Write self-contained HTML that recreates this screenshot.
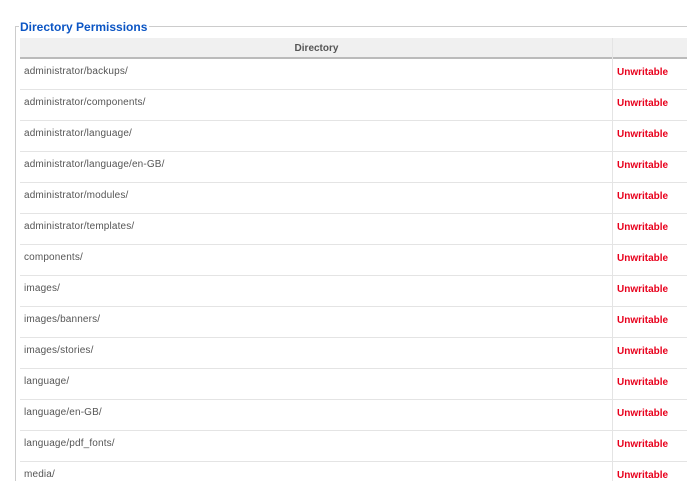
<!DOCTYPE html>
<html style="overflow:hidden;height:481px"><head><style>
body{margin:0;width:687px;height:481px;overflow:hidden;background:#fff;font-family:"Liberation Sans",Arial,sans-serif;position:relative}
.fs{position:absolute;left:15px;top:26px;width:700px;height:455px;border-left:1px solid #ccc;border-top:1px solid #ccc}
.lg{position:absolute;left:19px;top:20px;background:#fff;padding:0 2px 0 1px;color:#0b55c4;font-weight:bold;font-size:12px;line-height:15px}
.hd{position:absolute;left:20px;top:38px;width:700px;height:19px;background:#f0f0f0;border-bottom:2px solid #bbb}
.hd span{position:absolute;left:0;width:593px;text-align:center;top:5px;font-size:10px;font-weight:bold;color:#555}
.vl{position:absolute;left:612px;top:38px;width:1px;height:443px;background:#e4e4e4}
.row{position:absolute;left:20px;width:700px;height:30px;border-bottom:1px solid #e4e4e4}
.row .d{position:absolute;left:4px;top:7px;font-size:10px;letter-spacing:0.15px;color:#555}
.row .u{position:absolute;left:597px;top:8px;font-size:10px;font-weight:bold;color:#e8001c}
</style></head><body>
<div class="fs"></div>
<div class="hd"><span>Directory</span></div>
<div class="vl"></div>
<div class="lg">Directory Permissions</div>
<div class="row" style="top:59px"><span class="d">administrator/backups/</span><span class="u">Unwritable</span></div>
<div class="row" style="top:90px"><span class="d">administrator/components/</span><span class="u">Unwritable</span></div>
<div class="row" style="top:121px"><span class="d">administrator/language/</span><span class="u">Unwritable</span></div>
<div class="row" style="top:152px"><span class="d">administrator/language/en-GB/</span><span class="u">Unwritable</span></div>
<div class="row" style="top:183px"><span class="d">administrator/modules/</span><span class="u">Unwritable</span></div>
<div class="row" style="top:214px"><span class="d">administrator/templates/</span><span class="u">Unwritable</span></div>
<div class="row" style="top:245px"><span class="d">components/</span><span class="u">Unwritable</span></div>
<div class="row" style="top:276px"><span class="d">images/</span><span class="u">Unwritable</span></div>
<div class="row" style="top:307px"><span class="d">images/banners/</span><span class="u">Unwritable</span></div>
<div class="row" style="top:338px"><span class="d">images/stories/</span><span class="u">Unwritable</span></div>
<div class="row" style="top:369px"><span class="d">language/</span><span class="u">Unwritable</span></div>
<div class="row" style="top:400px"><span class="d">language/en-GB/</span><span class="u">Unwritable</span></div>
<div class="row" style="top:431px"><span class="d">language/pdf_fonts/</span><span class="u">Unwritable</span></div>
<div class="row" style="top:462px"><span class="d">media/</span><span class="u">Unwritable</span></div>
</body></html>
